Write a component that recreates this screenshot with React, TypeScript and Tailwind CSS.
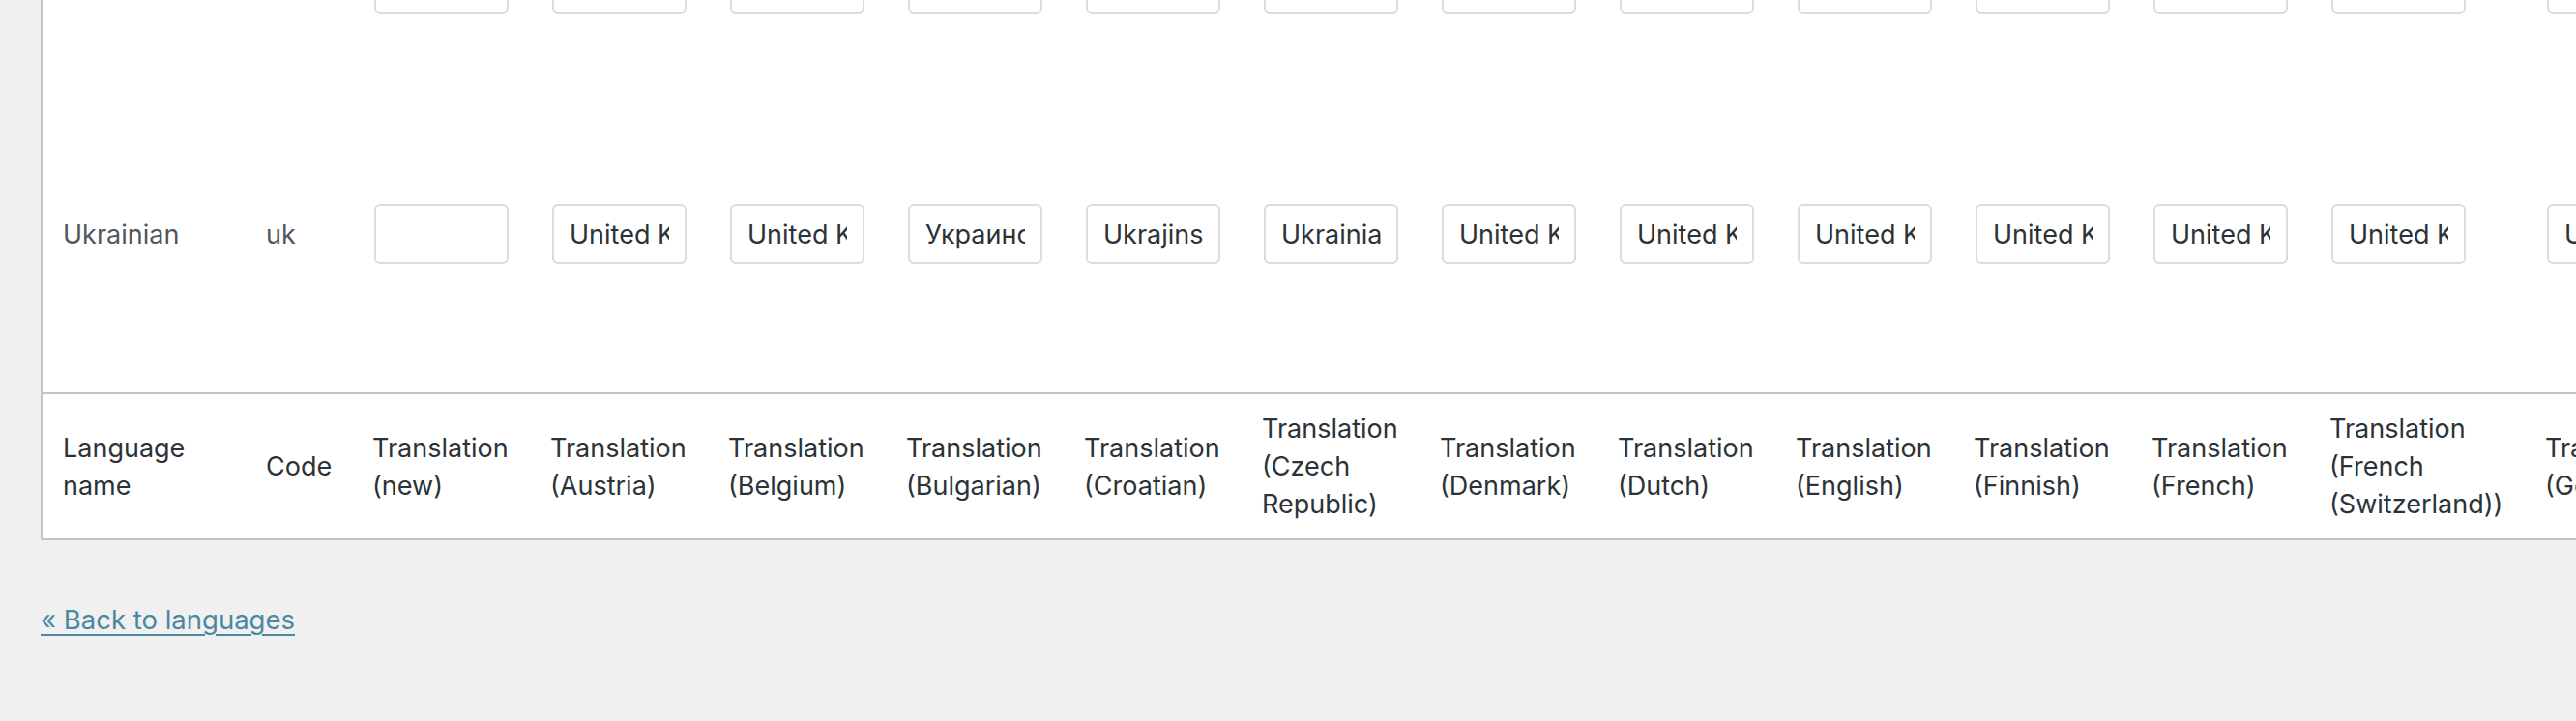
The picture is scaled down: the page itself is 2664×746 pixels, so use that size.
import React from 'react';

type Col = { lines: string[]; w: number; top: string; value: string };

const cols: Col[] = [
  { lines: ['Translation', '(new)'], w: 184, top: '', value: '' },
  { lines: ['Translation', '(Austria)'], w: 184, top: 'Turkey', value: 'United Kingdom' },
  { lines: ['Translation', '(Belgium)'], w: 184, top: 'Turkey', value: 'United Kingdom' },
  { lines: ['Translation', '(Bulgarian)'], w: 184, top: 'Турски', value: 'Украински' },
  { lines: ['Translation', '(Croatian)'], w: 184, top: 'Turski', value: 'Ukrajinski' },
  { lines: ['Translation', '(Czech', 'Republic)'], w: 184, top: 'Turkish', value: 'Ukrainian' },
  { lines: ['Translation', '(Denmark)'], w: 184, top: 'Turkey', value: 'United Kingdom' },
  { lines: ['Translation', '(Dutch)'], w: 184, top: 'Turkey', value: 'United Kingdom' },
  { lines: ['Translation', '(English)'], w: 184, top: 'Turkey', value: 'United Kingdom' },
  { lines: ['Translation', '(Finnish)'], w: 184, top: 'Turkey', value: 'United Kingdom' },
  { lines: ['Translation', '(French)'], w: 184, top: 'Turkey', value: 'United Kingdom' },
  { lines: ['Translation', '(French', '(Switzerland))'], w: 223, top: 'Turkey', value: 'United Kingdom' },
  { lines: ['Translation', '(German)'], w: 184, top: 'Turkey', value: 'United Kingdom' },
  { lines: ['Translation', '(Greek)'], w: 184, top: 'Turkey', value: 'United Kingdom' },
];

const inputCls =
  "mx-[2px] w-[139px] h-[62px] bg-white border-2 border-[#dcdcde] rounded-[6px] px-[16px] text-[27px] text-[#2c3338] outline-none font-['Inter',sans-serif]";

// first row sits above the fold, only the bottom of its inputs shows
const Row: React.FC<{ name: string; code: string; h: string; field: 'top' | 'value' }> = ({ name, code, h, field }) => (
  <tr className={h}>
    <td className="w-[210px] px-[21px] align-middle text-[#50575e]">{name}</td>
    <td className="w-[110px] px-[21px] align-middle text-[#50575e]">{code}</td>
    {cols.map((c, i) => (
      <td key={i} className="px-[21px] align-middle" style={{ width: c.w }}>
        <input type="text" readOnly defaultValue={c[field]} className={inputCls} />
      </td>
    ))}
  </tr>
);

const thCls =
  'border-t-2 border-[#c3c4c7] px-[21px] py-[16px] text-left align-middle font-normal text-[#2c3338]';

export default function App() {
  const total = 210 + 110 + cols.reduce((s, c) => s + c.w, 0);
  return (
    <div className="h-[746px] w-full overflow-hidden bg-[#f0f0f1] font-['Inter',sans-serif] text-[27px] leading-[39px]">
      <div className="ml-[42px] -mt-[112px] w-max bg-white border-l-2 border-b-2 border-[#c3c4c7]">
        <table className="table-fixed border-separate border-spacing-0" style={{ width: total }}>
          <tbody>
            <Row name="" code="" h="h-[190px]" field="top" />
            <Row name="Ukrainian" code="uk" h="h-[328px]" field="value" />
          </tbody>
          <tfoot>
            <tr>
              <th className={`w-[210px] ${thCls}`}>
                <div>Language</div>
                <div>name</div>
              </th>
              <th className={`w-[110px] ${thCls}`}>Code</th>
              {cols.map((c, i) => (
                <th key={i} className={thCls} style={{ width: c.w }}>
                  {c.lines.map((l, j) => (
                    <div key={j} className="whitespace-nowrap">{l}</div>
                  ))}
                </th>
              ))}
            </tr>
          </tfoot>
        </table>
      </div>
      <p className="ml-[42px] mt-[63px] text-[27.5px]">
        <a href="#" className="text-[#4a88a2] underline decoration-2 underline-offset-[5px]">
          « Back to languages
        </a>
      </p>
    </div>
  );
}
